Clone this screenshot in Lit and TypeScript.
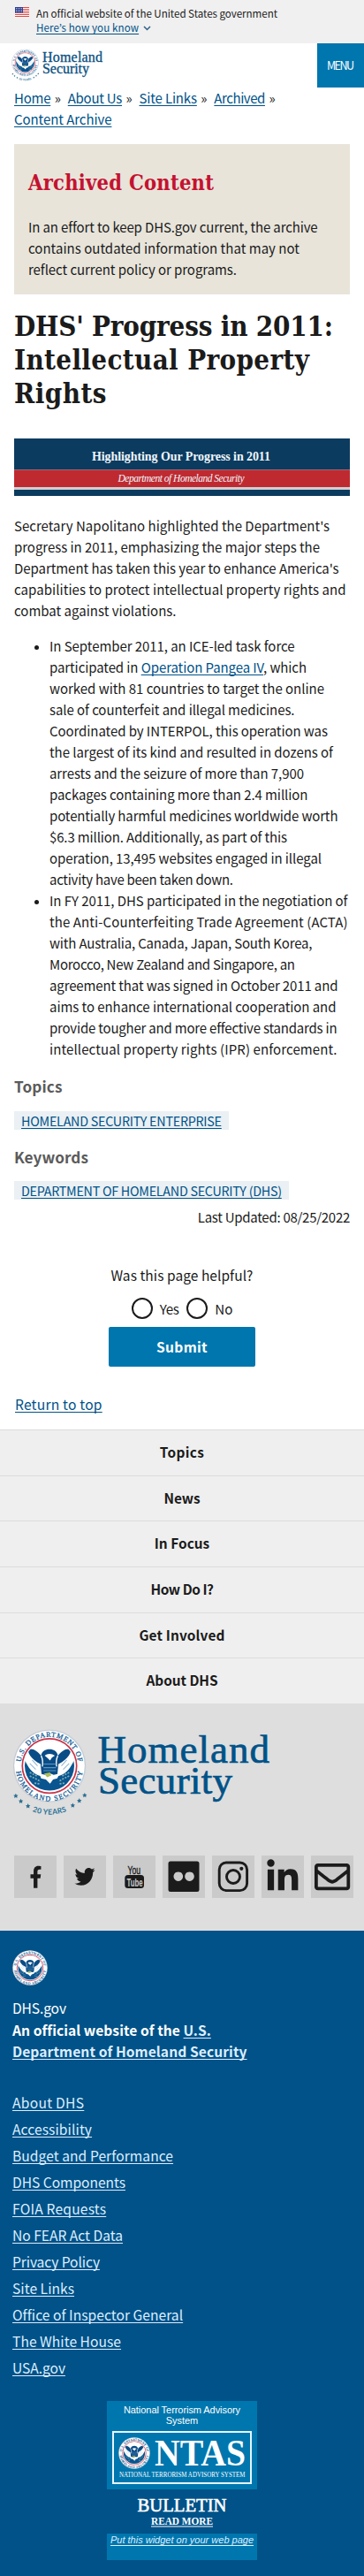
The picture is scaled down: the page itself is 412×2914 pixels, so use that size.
import { LitElement, html, svg, css, TemplateResult } from "lit";
import { customElement } from "lit/decorators.js";
import { styleMap } from "lit/directives/style-map.js";

const SANS = '"Noto Sans CJK KR", "Open Sans", sans-serif';
const SLAB = '"DejaVu Serif Condensed", "DejaVu Serif", serif';
const ARIAL = '"Liberation Sans", Arial, sans-serif';
const ctx = document.createElement("canvas").getContext("2d")!;

/** One line of text, tracked so that it takes up `width` pixels. */
const line = (
  text: string, width: number, size = 15,
  opts: { weight?: number; family?: string; style?: string; content?: unknown } = {}
): TemplateResult => {
  const { weight = 400, family = SANS, style = "normal", content = text } = opts;
  ctx.font = `${style} ${weight} ${size}px ${family}`;
  const spacing = (width - ctx.measureText(text).width) / (text.length - 1);
  return html`<span class="line" style=${styleMap({
    fontFamily: family, fontSize: `${size}px`, fontWeight: `${weight}`,
    fontStyle: style, letterSpacing: `${spacing.toFixed(3)}px`,
  })}>${content}</span>`;
};

let sealCount = 0;
/** Department seal, centred on cx, cy with outer radius r. */
const seal = (cx: number, cy: number, r: number) => {
  const id = `ring${sealCount++}`;
  return svg`<g transform="translate(${cx} ${cy}) scale(${r / 120})">
    <defs>
      <path id="${id}t" d="M-97 0A97 97 0 0 1 97 0"/>
      <path id="${id}b" d="M-112 6A112 112 0 0 0 112 6"/>
      <clipPath id="${id}c"><circle r="85"/></clipPath>
    </defs>
    <circle r="122" fill="#c5ccd6"/><circle r="118" fill="#fff"/>
    <circle r="91" fill="#fff" stroke="#c9354a" stroke-width="5"/>
    <circle r="83" fill="#0a5590"/>
    <g clip-path="url(#${id}c)">
      <path d="M-90 -90H90V-30L76 -6C60 24 44 30 30 34H-30C-44 30 -60 24 -76 -6L-90 -30Z" fill="#fff"/>
      <path d="M-68 -56C-52 -58 -40 -48 -28 -34C-26 -50 -14 -56 0 -56C14 -56 26 -50 28 -34C40 -48 52 -58 68 -56C78 -50 62 -22 30 -6L26 34H-26L-30 -6C-62 -22 -78 -50 -68 -56Z" fill="#0a4c86"/>
      <path d="M-28 -34C-22 -22 -22 -10 -24 2M28 -34C22 -22 22 -10 24 2" stroke="#fff" stroke-width="4" fill="none"/>
      <path d="M-16 -34C-8 -42 8 -42 18 -34L8 -28L2 -18L-8 -28Z" fill="#fff"/>
      <path d="M-58 -20L-40 0M-66 -8L-46 12M58 -20L40 0M66 -8L46 12" stroke="#8fb7d3" stroke-width="3"/>
      <path d="M-20 -6H22M-20 6H22M-20 16H22" stroke="#5b97c0" stroke-width="3"/>
      <path d="M-66 34L-44 44L-30 52M66 34L44 44L32 52M-66 22L-42 34M66 22L42 34M-50 58L-34 60M50 58L34 60" stroke="#7fb0b0" stroke-width="5" stroke-dasharray="6 4" fill="none"/>
      <path d="M-34 26L-14 30L0 24L14 30L34 26L26 42L12 46L2 60L-12 46L-28 42Z" fill="#fff"/>
      <path d="M-18 26L2 22L6 32L-8 38Z" fill="#a9bd5c"/>
    </g>
    <g font-family="Liberation Serif, serif" font-size="24" fill="#0a5590" stroke="#0a5590" stroke-width=".7" text-anchor="middle">
      <text textLength="278"><textPath href="#${id}t" startOffset="50%">U.S. DEPARTMENT OF</textPath></text>
      <text textLength="326"><textPath href="#${id}b" startOffset="50%">HOMELAND SECURITY</textPath></text>
    </g>
  </g>`;
};

const star = (x: number, y: number) =>
  svg`<path transform="translate(${x} ${y})" d="M0 -8L2.500 -2.500L8 -2L4 2L5 8L0 5L-5 8L-4 2L-8 -2L-2.500 -2.500Z" fill="#2c6e92"/>`;

const anniversary = (cx: number, cy: number, r: number) => svg`
  <g transform="translate(${cx} ${cy}) scale(${r / 120})">
    <defs><path id="yr${Math.round(r)}" d="M-163 0A163 163 0 0 0 163 0"/></defs>
    ${[[-113, 100], [-96, 118], [-72, 134], [78, 132], [100, 116], [118, 98]].map(([x, y]) => star(x, y))}
    <text font-family="Lato, sans-serif" font-weight="700" font-size="25" fill="#2c7298" text-anchor="middle" textLength="118">
      <textPath href="#yr${Math.round(r)}" startOffset="50%">20 YEARS</textPath></text>
  </g>`;

const BODY: [string, number][] = [
  ["Secretary Napolitano highlighted the Department's", 357],
  ["progress in 2011, emphasizing the major steps the", 346],
  ["Department has taken this year to enhance America's", 367.5],
  ["capabilities to protect intellectual property rights and", 375.5],
  ["combat against violations.", 183.5],
];
const PANGEA: [string, number][] = [
  ["In September 2011, an ICE-led task force", 277.5],
  ["participated in Operation Pangea IV, which", 291],
  ["worked with 81 countries to target the online", 311],
  ["sale of counterfeit and illegal medicines.", 277.5],
  ["Coordinated by INTERPOL, this operation was", 315],
  ["the largest of its kind and resulted in dozens of", 321],
  ["arrests and the seizure of more than 7,900", 288],
  ["packages containing more than 2.4 million", 292.5],
  ["potentially harmful medicines worldwide worth", 326.5],
  ["$6.3 million. Additionally, as part of this", 269],
  ["operation, 13,495 websites engaged in illegal", 308],
  ["activity have been taken down.", 208],
];
const ACTA: [string, number][] = [
  ["In FY 2011, DHS participated in the negotiation of", 337.5],
  ["the Anti-Counterfeiting Trade Agreement (ACTA)", 337.5],
  ["with Australia, Canada, Japan, South Korea,", 297.5],
  ["Morocco, New Zealand and Singapore, an", 278],
  ["agreement that was signed in October 2011 and", 326.5],
  ["aims to enhance international cooperation and", 324.5],
  ["provide tougher and more effective standards in", 325.5],
  ["intellectual property rights (IPR) enforcement.", 325.5],
];
const CRUMBS: [string, number][] = [["Home", 41.5], ["About Us", 61.5], ["Site Links", 65.5], ["Archived", 58]];
const NAV: [string, number][] = [["Topics", 50], ["News", 41], ["In Focus", 62.5], ["How Do I?", 71.5], ["Get Involved", 97], ["About DHS", 81]];
const FOOT: [string, number][] = [
  ["About DHS", 81], ["Accessibility", 90], ["Budget and Performance", 182], ["DHS Components", 128],
  ["FOIA Requests", 106], ["No FEAR Act Data", 125], ["Privacy Policy", 99], ["Site Links", 70],
  ["Office of Inspector General", 193], ["The White House", 123], ["USA.gov", 60],
];

const SOCIAL = [
  svg`<path transform="translate(17.500 11.700) scale(.0435 .049)" d="M279.14 288l14.22-92.66h-88.91v-60.13c0-25.35 12.42-50.06 52.24-50.06h40.42V6.26S260.43 0 225.36 0c-73.22 0-121.08 44.38-121.08 124.72v70.62H22.89V288h81.39v224h100.17V288z"/>`,
  svg`<path transform="translate(12.500 11.600) scale(.045 .048)" d="M459.37 151.716c.325 4.548.325 9.097.325 13.645 0 138.72-105.583 298.558-298.558 298.558-59.452 0-114.68-17.219-161.137-47.106 8.447.974 16.568 1.299 25.34 1.299 49.055 0 94.213-16.568 130.274-44.832-46.132-.975-84.792-31.188-98.112-72.772 6.498.974 12.995 1.624 19.818 1.624 9.421 0 18.843-1.3 27.614-3.573-48.081-9.747-84.143-51.98-84.143-102.985v-1.299c13.969 7.797 30.214 12.67 47.431 13.319-28.264-18.843-46.781-51.005-46.781-87.391 0-19.492 5.197-37.36 14.294-52.954 51.655 63.675 129.3 105.258 216.365 109.807-1.624-7.797-2.599-15.918-2.599-24.04 0-57.828 46.782-104.934 104.934-104.934 30.213 0 57.502 12.67 76.67 33.137 23.715-4.548 46.456-13.32 66.599-25.34-7.798 24.366-24.366 44.833-46.132 57.827 21.117-2.273 41.584-8.122 60.426-16.243-14.292 20.791-32.161 39.308-52.628 54.253z"/>`,
  svg`<g font-family="Liberation Sans Narrow, Liberation Sans, sans-serif" font-weight="700">
    <text x="16.500" y="20.500" font-size="12.500" font-weight="400" textLength="14.500" lengthAdjust="spacingAndGlyphs" stroke="#1b1b1b" stroke-width=".4">You</text>
    <rect x="13.300" y="22" width="21.700" height="15" rx="3.500"/>
    <text x="15.500" y="34.500" font-size="13" fill="#cacaca" textLength="18" lengthAdjust="spacingAndGlyphs">Tube</text></g>`,
  svg`<path fill-rule="evenodd" d="M9 6.500H39Q41.500 6.500 41.500 9V38.500Q41.500 41 39 41H9Q6.500 41 6.500 38.500V9Q6.500 6.500 9 6.500ZM17.800 18.400a5.300 5.300 0 1 0 .01 0ZM30.500 18.400a5.300 5.300 0 1 0 .01 0Z"/>`,
  svg`<g fill="none" stroke="#1b1b1b" stroke-width="2.900"><rect x="8.200" y="8" width="31.400" height="31.600" rx="8"/><circle cx="24" cy="24" r="7.500"/></g><circle cx="33.300" cy="14.800" r="2.100"/>`,
  svg`<path transform="translate(6.300 4.200) scale(.0783)" d="M100.28 448H7.4V148.9h92.88zM53.79 108.1C24.09 108.1 0 83.5 0 53.8a53.79 53.79 0 0 1 107.58 0c0 29.7-24.1 54.3-53.79 54.3zM447.9 448h-92.68V302.4c0-34.7-.7-79.2-48.29-79.2-48.29 0-55.69 37.7-55.69 76.7V448h-92.78V148.9h89.08v40.8h1.3c12.4-23.5 42.69-48.3 87.88-48.3 94 0 111.28 61.9 111.28 142.3V448z"/>`,
  svg`<path transform="translate(4 4) scale(.0785)" d="M464 64H48C21.49 64 0 85.49 0 112v288c0 26.51 21.49 48 48 48h416c26.51 0 48-21.49 48-48V112c0-26.51-21.49-48-48-48zm0 48v40.805c-22.422 18.259-58.168 46.651-134.587 106.49-16.841 13.247-50.201 45.072-73.413 44.701-23.208.375-56.579-31.459-73.413-44.701C106.18 199.465 70.425 171.067 48 152.805V112h416zM48 400V214.398c22.914 18.251 55.409 43.862 104.938 82.646 21.857 17.205 60.134 55.186 103.062 54.955 42.717.231 80.509-37.199 103.053-54.947 49.528-38.783 82.032-64.401 104.947-82.653V400H48z"/>`,
];

@customElement("app-root")
export class AppRoot extends LitElement {
  static styles = css`
    :host { display: block; width: 412px; background: #fff; color: #1b1b1b; overflow: hidden; }
    * { box-sizing: border-box; }
    p, h1, h2, h3, ul { margin: 0; padding: 0; }
    svg { display: block; flex: none; }
    .line { display: block; white-space: nowrap; }
    a { color: #005288; text-decoration: underline; text-decoration-thickness: 1px; text-underline-offset: 2px; text-decoration-skip-ink: none; }
    .gov { height: 49px; background: #f0f0f0; display: flex; gap: 8px; padding: 7px 0 0 17px; line-height: 16px; }
    .gov svg { margin-top: 1px; }
    .gov .know { display: flex; align-items: center; gap: 5px; }
    .gov .know svg { margin-top: 2px; }
    .head { height: 50px; display: flex; justify-content: space-between; }
    .menu { width: 53px; height: 50px; background: #0076ae; color: #fff; line-height: 50px; padding-left: 11px; }
    .crumbs { height: 64px; padding-left: 16px; line-height: 24px; }
    .crumbs div { display: flex; }
    .sep { width: 6px; margin: 0 9px 0 4.500px; font: 15px/24px "Noto Sans CJK KR", sans-serif; }
    main { padding: 0 16px; line-height: 24px; height: 1454px; }
    .archived { height: 170px; padding: 29px 16px 0; background: #e8e4da; }
    .archived h2 { color: #c41230; line-height: 30px; margin-bottom: 22.500px; }
    h1 { margin: 16.500px 0 31.500px; line-height: 38.330px; color: #1b1b1b; }
    .body { margin: 22px 0 16px; }
    ul.points { padding-left: 40px; }
    ul.points li { list-style: none; display: flex; margin-left: -17px; }
    .dot { flex: none; width: 5px; height: 5px; border-radius: 50%; background: #1b1b1b; margin: 11.500px 12px 0 0; }
    h3 { color: #5b5b5b; }
    .topics { margin: 18.500px 0 15.500px; }
    .keywords { margin: 19.500px 0 14.500px; }
    .tag { display: block; width: max-content; height: 21px; line-height: 21px; padding: 0 8px; background: #eaf0f3; }
    .updated { display: flex; justify-content: flex-end; margin-top: 8.500px; }
    .helpful { display: flex; flex-direction: column; align-items: center; margin-top: 40.500px; }
    .choices { display: flex; align-items: center; margin: 14px 0 9px; height: 24px; }
    .radio { width: 24px; height: 24px; border: 2px solid #1b1b1b; border-radius: 50%; margin-right: 8px; }
    .radio + .line:not(:last-child) { margin-right: 9px; }
    .submit { width: 166px; height: 45px; background: #0076ae; color: #fff; border-radius: 2px; display: flex; justify-content: center; line-height: 44px; }
    .top { display: block; margin: 30px 0 0 1px; width: max-content; }
    nav { background: #efefef; }
    nav div { height: 51.670px; border-top: 1px solid #dcdcdc; display: flex; justify-content: center; line-height: 49px; }
    .grey { height: 257px; background: #dedede; padding-top: 18px; }
    .social { display: flex; gap: 8px; margin: 44px 0 0 16px; }
    .social div { width: 48px; height: 48px; background: #cacaca; }
    .social svg { fill: #1b1b1b; }
    .blue { height: 730px; background: #005288; color: #fff; padding: 22px 0 0 14px; line-height: 24.500px; }
    .blue a { color: #dceeff; }
    .site { margin-top: 13.500px; }
    .links { margin-top: 30.500px; line-height: 30px; }
    .ntas { width: 170px; height: 180px; margin: 22.500px 0 0 107px; line-height: 12px; }
    .panel { background: #0076ae; }
    .panel.upper { height: 100px; padding-top: 4.500px; display: flex; flex-direction: column; align-items: center; }
    .panel.upper svg { margin-top: 6px; }
    .panel.lower { height: 30px; padding: 1.500px 0 0 4px; }
  `;

  private lines(rows: [string, number][]) {
    return rows.map(([t, w]) => line(t, w, 15, t.includes("Pangea")
      ? { content: html`participated in <a>Operation Pangea IV</a>, which` } : {}));
  }

  render() {
    return html`
      <div class="gov">
        <svg width="16" height="11" viewBox="0 0 16 11">
          <rect width="16" height="11" fill="#fff"/>
          <path d="M0 .5H16M0 2.500H16M0 4.500H16M0 6.500H16M0 8.500H16M0 10.500H16" stroke="#db4a45"/>
          <rect width="9" height="6.500" fill="#2f3f91"/>
          <path d="M1 1.500H9M1 3.500H9M1 5.300H9" stroke="#c3c8e6" stroke-dasharray="1 1"/>
        </svg>
        <div>
          ${line("An official website of the United States government", 273, 11.6)}
          <div class="know"><a>${line("Here’s how you know", 116, 11.6)}</a>
            <svg width="9" height="6" viewBox="0 0 9 6"><path d="M1 1L4.500 4.500L8 1" fill="none" stroke="#2f6086" stroke-width="1.500"/></svg></div>
        </div>
      </div>
      <div class="head">
        <svg width="200" height="50" viewBox="0 49 200 50">
          ${seal(28.5, 71, 15)}${anniversary(28.5, 71, 15)}
          <g font-family="Liberation Serif, serif" font-size="16" fill="#0b4f80" stroke="#0b4f80" stroke-width=".3">
            <text x="48" y="70.300" textLength="68">Homeland</text><text x="48" y="83" textLength="53">Security</text></g>
        </svg>
        <div class="menu">${line("MENU", 31, 12.6)}</div>
      </div>
      <div class="crumbs">
        <div>${CRUMBS.map(([t, w]) => html`<a>${line(t, w)}</a><span class="sep">»</span>`)}</div>
        <div><a>${line("Content Archive", 110.5)}</a></div>
      </div>
      <main>
        <div class="archived">
          <h2>${line("Archived Content", 210, 23.5, { weight: 700, family: SLAB })}</h2>
          <p>${this.lines([
            ["In an effort to keep DHS.gov current, the archive", 327.5],
            ["contains outdated information that may not", 307],
            ["reflect current policy or programs.", 236]])}</p>
        </div>
        <h1>${([["DHS' Progress in 2011:", 361], ["Intellectual Property", 334], ["Rights", 104.5]] as [string, number][])
          .map(([t, w]) => line(t, w, 31, { weight: 700, family: SLAB }))}</h1>
        <svg width="380" height="65" viewBox="16 496 380 65">
          <path fill="#0b3b5f" d="M16 496H396V531.500H16ZM16 554H396V561H16Z"/>
          <path fill="#bf2a31" d="M16 531.500H396V551H16Z"/><path fill="#cfcfd2" d="M16 551H396V554H16Z"/>
          <g fill="#eef6fc" font-family="Liberation Serif, serif">
            <text x="104" y="521" font-size="14" font-weight="700" textLength="202">Highlighting Our Progress in 2011</text>
            <text x="133.500" y="544.500" font-size="11.500" font-style="italic" textLength="143">Department of Homeland Security</text>
          </g>
        </svg>
        <p class="body">${this.lines(BODY)}</p>
        <ul class="points">
          <li><span class="dot"></span><div>${this.lines(PANGEA)}</div></li>
          <li><span class="dot"></span><div>${this.lines(ACTA)}</div></li>
        </ul>
        <h3 class="topics">${line("Topics", 54.5, 17.2, { weight: 700 })}</h3>
        <span class="tag"><a>${line("HOMELAND SECURITY ENTERPRISE", 227, 14.3)}</a></span>
        <h3 class="keywords">${line("Keywords", 84, 17.2, { weight: 700 })}</h3>
        <span class="tag"><a>${line("DEPARTMENT OF HOMELAND SECURITY (DHS)", 295, 14.3)}</a></span>
        <div class="updated">${line("Last Updated: 08/25/2022", 172.5)}</div>
        <div class="helpful">
          ${line("Was this page helpful?", 161, 15.5)}
          <div class="choices"><span class="radio"></span>${line("Yes", 22, 15.2)}<span class="radio"></span>${line("No", 20, 15.2)}</div>
          <div class="submit">${line("Submit", 57.5, 15.6, { weight: 700 })}</div>
        </div>
        <a class="top">${line("Return to top", 98.5, 15.6)}</a>
      </main>
      <nav>${NAV.map(([t, w]) => html`<div>${line(t, w, 15.4, { weight: 700 })}</div>`)}</nav>
      <div class="grey">
        <svg width="412" height="110" viewBox="0 1945 412 110">
          ${seal(56, 1997.6, 40.5)}${anniversary(56, 1997.6, 40.5)}
          <g font-family="Liberation Serif, serif" font-size="45" fill="#005288" stroke="#005288" stroke-width=".7">
            <text x="110.500" y="1993.500" textLength="194.500">Homeland</text><text x="111" y="2029" textLength="152">Security</text></g>
        </svg>
        <div class="social">${SOCIAL.map((icon) => html`<div><svg width="48" height="48" viewBox="0 0 48 48">${icon}</svg></div>`)}</div>
      </div>
      <div class="blue">
        <svg width="40" height="40" viewBox="0 0 40 40">${seal(20, 20, 19.5)}</svg>
        <div class="site">
          ${line("DHS.gov", 61, 15.6)}
          ${line("An official website of the U.S.", 224.5, 15.6, { weight: 700, content: html`An official website of the <a>U.S.</a>` })}
          <a>${line("Department of Homeland Security", 265.5, 15.6, { weight: 700 })}</a>
        </div>
        <div class="links">${FOOT.map(([t, w]) => html`<a>${line(t, w, 15.6)}</a>`)}</div>
        <div class="ntas">
          <div class="panel upper">
            ${line("National Terrorism Advisory", 133, 11, { family: ARIAL })}
            ${line("System", 36.5, 11, { family: ARIAL })}
            <svg width="158" height="60" viewBox="127 2751 158 60">
              <rect x="128" y="2752" width="156" height="58" fill="none" stroke="#e6f5ff" stroke-width="2"/>
              ${seal(152, 2776, 17.5)}
              <g fill="#fff" font-family="Liberation Serif, serif">
                <text x="175" y="2790" font-size="42" font-weight="700" textLength="103" lengthAdjust="spacingAndGlyphs">NTAS</text>
                <text x="135" y="2803" font-size="7.800" textLength="142.500" lengthAdjust="spacingAndGlyphs">NATIONAL TERRORISM ADVISORY SYSTEM</text>
              </g>
            </svg>
          </div>
          <svg width="170" height="50" viewBox="121 2816 170 50">
            <g fill="#fff" font-family="Liberation Serif, serif">
              <text x="155.500" y="2841" font-size="22" stroke="#fff" stroke-width=".6" textLength="101" lengthAdjust="spacingAndGlyphs">BULLETIN</text>
              <text x="171" y="2856" font-size="13" font-weight="700" textLength="70" lengthAdjust="spacingAndGlyphs">READ MORE</text>
              <rect x="171" y="2857.500" width="70" height="1"/>
            </g>
          </svg>
          <div class="panel lower"><a>${line("Put this widget on your web page", 162, 11, { family: ARIAL, style: "italic" })}</a></div>
        </div>
      </div>`;
  }
}
